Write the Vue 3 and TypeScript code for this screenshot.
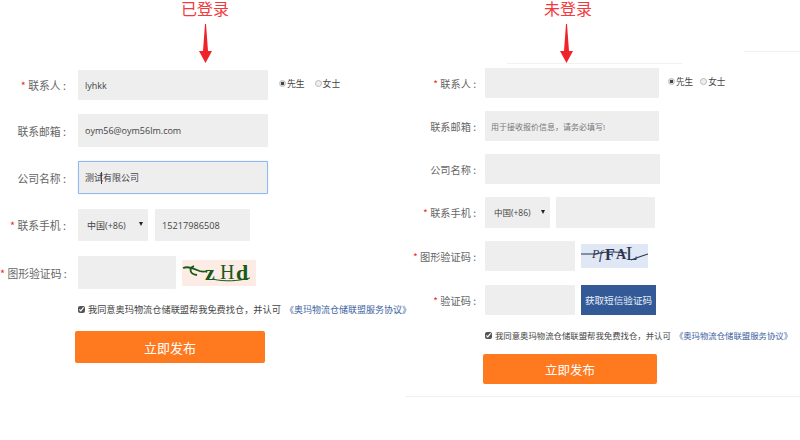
<script setup lang="ts">
const arrow = "6,0 7,0 9,27 13,27 6.5,39 0,27 4,27";
</script>

<template>
  <div class="page">
    <section class="form form-a">
      <header class="head">
        <h2 class="title">已登录</h2>
        <svg class="arrow" width="13" height="39" viewBox="0 0 13 39"><polygon :points="arrow" /></svg>
      </header>

      <div class="row h30 mb14">
        <label class="label"><i>*</i> 联系人 :</label>
        <input class="field w190" value="lyhkk" />
        <div class="gender">
          <span class="opt"><input type="radio" name="g1" checked />先生</span>
          <span class="opt"><input type="radio" name="g1" />女士</span>
        </div>
      </div>
      <div class="row h33 mb14">
        <label class="label">联系邮箱 :</label>
        <input class="field w190" value="oym56@oym56lm.com" />
      </div>
      <div class="row h33 mb15">
        <label class="label">公司名称 :</label>
        <div class="focus-wrap">
          <input class="field w190 focused" value="测试有限公司" />
          <span class="caret"></span>
        </div>
      </div>
      <div class="row h32 mb15">
        <label class="label"><i>*</i> 联系手机 :</label>
        <div class="select w70"><select class="field"><option>中国(+86)</option></select></div>
        <input class="field w95 ml7 num" value="15217986508" />
      </div>
      <div class="row h33 mb11">
        <label class="label"><i>*</i> 图形验证码 :</label>
        <input class="field w98" />
        <div class="captcha captcha-a">
          <svg width="74" height="26" viewBox="0 0 74 26">
            <path d="M1 8 C6 6 11 8 15 10 C19 12 22 12 25 11 M12 6 C7 8 7 14 15 15" fill="none" stroke="#175a17" stroke-width="1.8" />
            <text x="23" y="20" font-size="22" font-weight="700">z</text>
            <text x="38" y="19" font-size="20">H</text>
            <text x="54" y="20" font-size="22" font-weight="700">d</text>
            <path d="M30 19 C44 22 56 21 68 18" fill="none" stroke="#175a17" stroke-width="1" />
          </svg>
        </div>
      </div>
      <div class="agree">
        <input type="checkbox" checked />
        <span>我同意奥玛物流仓储联盟帮我免费找仓，并认可</span>
        <a class="link">《奥玛物流仓储联盟服务协议》</a>
      </div>
      <button class="submit">立即发布</button>
    </section>

    <section class="form form-b">
      <div class="head-row">
        <header class="head">
          <h2 class="title">未登录</h2>
          <svg class="arrow" width="13" height="39" viewBox="0 0 13 39"><polygon :points="arrow" /></svg>
        </header>
        <div class="rule rule-top"></div>
      </div>
      <div class="rule rule-head"></div>

      <div class="row h30 mb13">
        <label class="label"><i>*</i> 联系人 :</label>
        <input class="field w174" />
        <div class="gender">
          <span class="opt"><input type="radio" name="g2" checked />先生</span>
          <span class="opt"><input type="radio" name="g2" />女士</span>
        </div>
      </div>
      <div class="row h30 mb13">
        <label class="label">联系邮箱 :</label>
        <input class="field w174 ph" placeholder="用于接收报价信息，请务必填写!" />
      </div>
      <div class="row h30 mb13">
        <label class="label">公司名称 :</label>
        <input class="field w175" />
      </div>
      <div class="row h31 mb13">
        <label class="label"><i>*</i> 联系手机 :</label>
        <div class="select w65"><select class="field"><option>中国(+86)</option></select></div>
        <input class="field w99 ml6" />
      </div>
      <div class="row h30 mb14">
        <label class="label"><i>*</i> 图形验证码 :</label>
        <input class="field w90" />
        <div class="captcha captcha-b">
          <svg width="67" height="24" viewBox="0 0 67 24">
            <path d="M0 10 L14 10 C24 7 38 8 46 9 M50 16 L58 13 L67 10" fill="none" stroke="#2c3550" stroke-width="1.1" />
            <text x="11" y="14" font-size="12" font-style="italic">P</text>
            <text x="18" y="15" font-size="13" font-style="italic">f</text>
            <text x="24" y="16" font-size="16" font-weight="700">F</text>
            <text x="35" y="15" font-size="14" font-weight="700">A</text>
            <text x="45" y="16" font-size="19">L</text>
          </svg>
        </div>
      </div>
      <div class="row h30 mb11">
        <label class="label"><i>*</i> 验证码 :</label>
        <input class="field w90" />
        <button class="sms">获取短信验证码</button>
      </div>
      <div class="agree">
        <input type="checkbox" checked />
        <span>我同意奥玛物流仓储联盟帮我免费找仓，并认可</span>
        <a class="link">《奥玛物流仓储联盟服务协议》</a>
      </div>
      <button class="submit">立即发布</button>
      <div class="rule rule-foot"></div>
    </section>
  </div>
</template>

<style>
html, body { margin: 0; background: #fff; }
</style>

<style scoped>
.page {
  display: flex;
  width: 800px;
  height: 440px;
  overflow: hidden;
  background: #fff;
  font-family: "Noto Sans CJK SC", "Noto Sans", sans-serif;
  color: #666;
}
.form { display: flex; flex-direction: column; flex: none; }
.form-a { width: 405px; --label: 66px; --gap: 12px; --fs: 10.8px; }
.form-b { width: 395px; --label: 71px; --gap: 9px; --fs: 10.2px; }

.head { display: flex; flex-direction: column; align-items: center; height: 63px; }
.form-a .head { margin-left: 5px; width: 400px; height: 70px; }
.form-b .head { width: 326px; }
.head-row { display: flex; align-items: flex-start; height: 63px; }
.title {
  margin: 0;
  height: 24px;
  font-family: "Liberation Sans", "Noto Sans CJK SC", sans-serif;
  font-size: 16px;
  font-weight: 400;
  line-height: 20px;
  color: #f5383c;
}
.arrow { display: block; }
.form-b .arrow { margin-right: 4px; }
.arrow polygon { fill: #f0232a; }

.rule { height: 1px; background: #f1f1f1; flex: none; }
.rule-top { width: 56px; margin: 51px 0 0 13px; }
.rule-head { width: 175px; margin: 0 0 4px 102px; }
.rule-foot { width: 395px; margin-top: 12px; }

.row { display: flex; align-items: center; flex: none; }
.h30 { height: 30px; } .h31 { height: 31px; } .h32 { height: 32px; } .h33 { height: 33px; }
.mb11 { margin-bottom: 11px; } .mb13 { margin-bottom: 13px; }
.mb14 { margin-bottom: 14px; } .mb15 { margin-bottom: 15px; }

.label {
  flex: none;
  box-sizing: border-box;
  width: var(--label);
  margin-right: var(--gap);
  text-align: right;
  white-space: nowrap;
  font-size: var(--fs);
}
.label i { color: #e8302f; font-style: normal; }

.field {
  box-sizing: border-box;
  height: 100%;
  padding: 0 7px;
  border: 0;
  border-radius: 1px;
  outline: 0;
  background: #eee;
  font-family: "Open Sans", "Noto Sans CJK SC", sans-serif;
  font-size: 9px;
  color: #444;
  flex: none;
}
.w190 { width: 190px; } .w174 { width: 174px; } .w175 { width: 175px; }
.w95 { width: 95px; } .w99 { width: 99px; } .w98 { width: 98px; } .w90 { width: 90px; }
.ml7 { margin-left: 7px; } .ml6 { margin-left: 6px; }
.num { font-size: 9.2px; }
.ph::placeholder { color: #777; opacity: 1; font-size: 8px; }
.ph { padding-left: 6px; }

.focus-wrap { position: relative; height: 100%; }
.focused { border: 1px solid #8fb9f0; padding-left: 6px; box-shadow: 0 0 1px #8fb9f0; }
.caret { position: absolute; left: 23px; top: 11px; width: 1px; height: 12px; background: #444; }

.select { position: relative; height: 100%; flex: none; }
.w70 { width: 70px; } .w65 { width: 65px; }
.select select { width: 100%; appearance: none; padding-left: 9px; font-size: 9px; }
.form-b .select select { font-size: 8.5px; }
.select::after {
  content: "";
  position: absolute;
  right: 5px;
  top: calc(50% - 3px);
  border: 2.5px solid transparent;
  border-top: 4px solid #222;
  border-bottom: 0;
}

.gender { display: flex; margin-left: 11px; margin-top: -4px; gap: 10px; font-size: 8.8px; color: #444; }
.form-b .gender { margin-left: 9px; gap: 7px; font-size: 8.6px; }
.opt { display: flex; align-items: center; gap: 1px; white-space: nowrap; }
.opt input {
  appearance: none;
  box-sizing: border-box;
  width: 7px;
  height: 7px;
  margin: 0;
  border: 1px solid #bbb;
  border-radius: 50%;
  background: #eee;
}
.opt input:checked { background: radial-gradient(circle, #444 0 1.6px, #ddd 2px); }

.captcha { flex: none; margin-left: 6px; }
.captcha svg { display: block; font-family: "Liberation Serif", serif; }
.captcha-a { background: #fdebe6; }
.captcha-a svg text { fill: #175a17; }
.captcha-b { background: #e0e7f5; }
.captcha-b svg text { fill: #2c3550; }

.sms {
  width: 75px;
  height: 100%;
  margin-left: 6px;
  padding: 0;
  border: 0;
  background: #335a96;
  color: #e8eef8;
  font: 9.6px "Noto Sans CJK SC", sans-serif;
  white-space: nowrap;
}

.agree { display: flex; align-items: center; white-space: nowrap; color: #444; flex: none; }
.agree input { box-sizing: border-box; width: 7px; height: 7px; margin: 0 3px 0 0; accent-color: #555; flex: none; }
.link { color: #3b609e; }
.form-a .agree { margin-left: 78px; height: 18px; font-size: 9.2px; }
.form-a .link { margin-left: 4px; font-size: 9px; }
.form-b .agree { margin-left: 80px; height: 18px; font-size: 8.4px; }
.form-b .link { margin-left: 4px; font-size: 8.4px; }

.submit {
  flex: none;
  height: 32px;
  padding: 0;
  border: 0;
  border-radius: 2px;
  background: #ff7a1f;
  color: #fff;
  font-family: "Noto Sans CJK SC", sans-serif;
}
.form-a .submit { width: 190px; margin: 13px 0 0 75px; font-size: 13px; }
.form-b .submit { width: 174px; margin: 10px 0 0 78px; height: 30px; font-size: 12.5px; }
</style>
